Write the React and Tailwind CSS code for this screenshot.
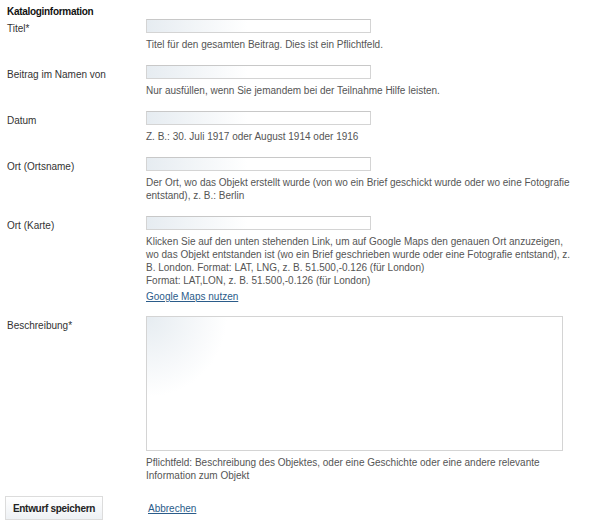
const inputBg =
  'bg-[linear-gradient(90deg,#e6ecf1_0%,#ffffff_45%)] border border-[#d4d4d4] border-t-[#c8c8c8]';

function Field({ label, children, className = '' }) {
  return (
    <div className={`flex ${className}`}>
      <div className="w-[139px] shrink-0 pt-[3px] text-[#333] leading-[13px]">{label}</div>
      <div className="w-[424px]">{children}</div>
    </div>
  );
}

function Help({ children, className = '' }) {
  return <p className={`mt-[5px] text-[#555] leading-[13px] ${className}`}>{children}</p>;
}

export default function App() {
  return (
    <div
      className="bg-white w-[590px] h-[527px] pl-[7px] pt-[5px] text-[10px] leading-[13px]"
      style={{ fontFamily: '"Liberation Sans", Arial, sans-serif' }}
    >
      <h3 className="font-bold text-[#111] text-[10px] leading-[14px] tracking-[-0.3px]">Kataloginformation</h3>
      <Field label="Titel*">
        <input className={`block h-[14px] w-[225px] ${inputBg}`} />
        <Help>Titel für den gesamten Beitrag. Dies ist ein Pflichtfeld.</Help>
      </Field>
      <Field label="Beitrag im Namen von" className="mt-[14px]">
        <input className={`block h-[14px] w-[225px] ${inputBg}`} />
        <Help>Nur ausfüllen, wenn Sie jemandem bei der Teilnahme Hilfe leisten.</Help>
      </Field>
      <Field label="Datum" className="mt-[14px]">
        <input className={`block h-[14px] w-[225px] ${inputBg}`} />
        <Help>Z. B.: 30. Juli 1917 oder August 1914 oder 1916</Help>
      </Field>
      <Field label="Ort (Ortsname)" className="mt-[14px]">
        <input className={`block h-[14px] w-[225px] ${inputBg}`} />
        <Help>
          Der Ort, wo das Objekt erstellt wurde (von wo ein Brief geschickt wurde oder wo eine Fotografie
          entstand), z. B.: Berlin
        </Help>
      </Field>
      <Field label="Ort (Karte)" className="mt-[14px]">
        <input className={`block h-[14px] w-[225px] ${inputBg}`} />
        <Help className="whitespace-nowrap">
          Klicken Sie auf den unten stehenden Link, um auf Google Maps den genauen Ort anzuzeigen,
          <br />
          wo das Objekt entstanden ist (wo ein Brief geschrieben wurde oder eine Fotografie entstand), z.
          <br />
          B. London. Format: LAT, LNG, z. B. 51.500,-0.126 (für London)
          <br />
          Format: LAT,LON, z. B. 51.500,-0.126 (für London)
        </Help>
        <a href="#" className="mt-[3px] block w-fit text-[#2b5c8a] underline">
          Google Maps nutzen
        </a>
      </Field>
      <Field label="Beschreibung*" className="mt-[13px]">
        <textarea className="block h-[135px] w-[417px] resize-none border border-[#d4d4d4] bg-[radial-gradient(circle_at_0_0,#e6ecf1_0%,#ffffff_80px)]" />
        <Help>
          Pflichtfeld: Beschreibung des Objektes, oder eine Geschichte oder eine andere relevante Information
          zum Objekt
        </Help>
      </Field>
      <div className="mt-[14px] flex items-center">
        <button className="-ml-[2px] h-[24px] w-[98px] border border-[#dcdcdc] bg-[linear-gradient(#ffffff,#eef1f4)] font-bold text-[#222] tracking-[-0.3px]">
          Entwurf speichern
        </button>
        <a href="#" className="ml-[45px] text-[#2b5c8a] underline">
          Abbrechen
        </a>
      </div>
    </div>
  );
}
